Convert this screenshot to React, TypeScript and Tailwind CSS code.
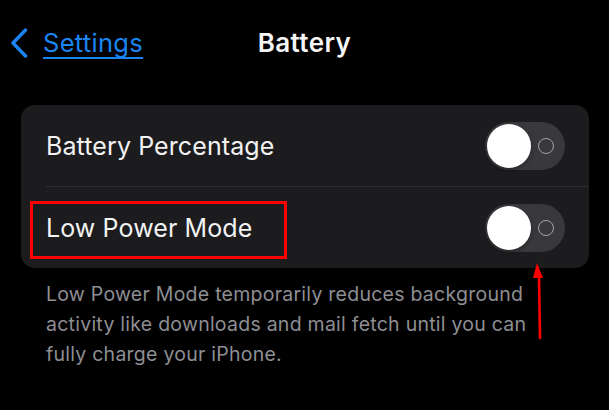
import React from "react";

function Toggle() {
  return (
    <div className="relative flex h-[48px] w-[80px] items-center rounded-full bg-[#39393d] shrink-0">
      <div className="ml-[2px] h-[44px] w-[44px] rounded-full bg-white shadow-[0_2px_4px_rgba(0,0,0,0.35)]" />
      <div className="ml-[7px] h-[16px] w-[16px] rounded-full border-[1.5px] border-[#a3a3a8]" />
    </div>
  );
}

export default function App() {
  return (
    <div
      className="relative h-[410px] w-[609px] overflow-hidden bg-black text-white"
      style={{ fontFamily: "Inter, 'Noto Sans', sans-serif" }}
    >
      <div className="grid h-[86px] grid-cols-[1fr_auto_1fr] items-center">
        <div className="flex items-center pl-[10px]">
          <svg width="18" height="30" viewBox="0 0 18 30" className="shrink-0">
            <path d="M15.5 2 L3 15 L15.5 28" fill="none" stroke="#1b84f2" strokeWidth="3.4" strokeLinecap="round" strokeLinejoin="round" />
          </svg>
          <span className="ml-[15px] text-[25.5px] leading-none tracking-[0.3px] text-[#1b84f2] underline decoration-[2px] underline-offset-[5px]">
            Settings
          </span>
        </div>
        <div className="text-[26px] font-semibold leading-none tracking-[0.4px] text-[#f5f5f5]">Battery</div>
        <div />
      </div>

      <div className="relative mx-[20px] ml-[21px] mt-[19px] rounded-[14px] bg-[#1c1c1e]">
        <div className="flex h-[81px] items-center justify-between pl-[25px] pr-[24px]">
          <span className="pt-[3px] text-[25px] tracking-[0.1px] text-[#f2f2f2]">Battery Percentage</span>
          <Toggle />
        </div>
        <div className="ml-[25px] h-px bg-[#2e2e31]" />
        <div className="flex h-[81px] items-center justify-between pl-[25px] pr-[24px]">
          <span className="pt-[3px] text-[25px] tracking-[0.1px] text-[#f2f2f2]">Low Power Mode</span>
          <Toggle />
        </div>
        <div className="absolute left-[9px] top-[96px] h-[58px] w-[257px] border-[3px] border-[#ff0000]" />
      </div>

      <div className="ml-[46px] mt-[11px] text-[19.5px] leading-[30px] tracking-[0.25px] text-[#8e8e93]">
        <div>Low Power Mode temporarily reduces background</div>
        <div>activity like downloads and mail fetch until you can</div>
        <div>fully charge your iPhone.</div>
      </div>

      <svg className="absolute left-[528px] top-[258px]" width="20" height="84" viewBox="0 0 20 84">
        <path d="M11 18 L12 80" stroke="#ff0000" strokeWidth="2.6" strokeLinecap="round" fill="none" />
        <path d="M8 5 L4 20 L14 20 Z" fill="#ff0000" transform="translate(1 0)" />
      </svg>
    </div>
  );
}
